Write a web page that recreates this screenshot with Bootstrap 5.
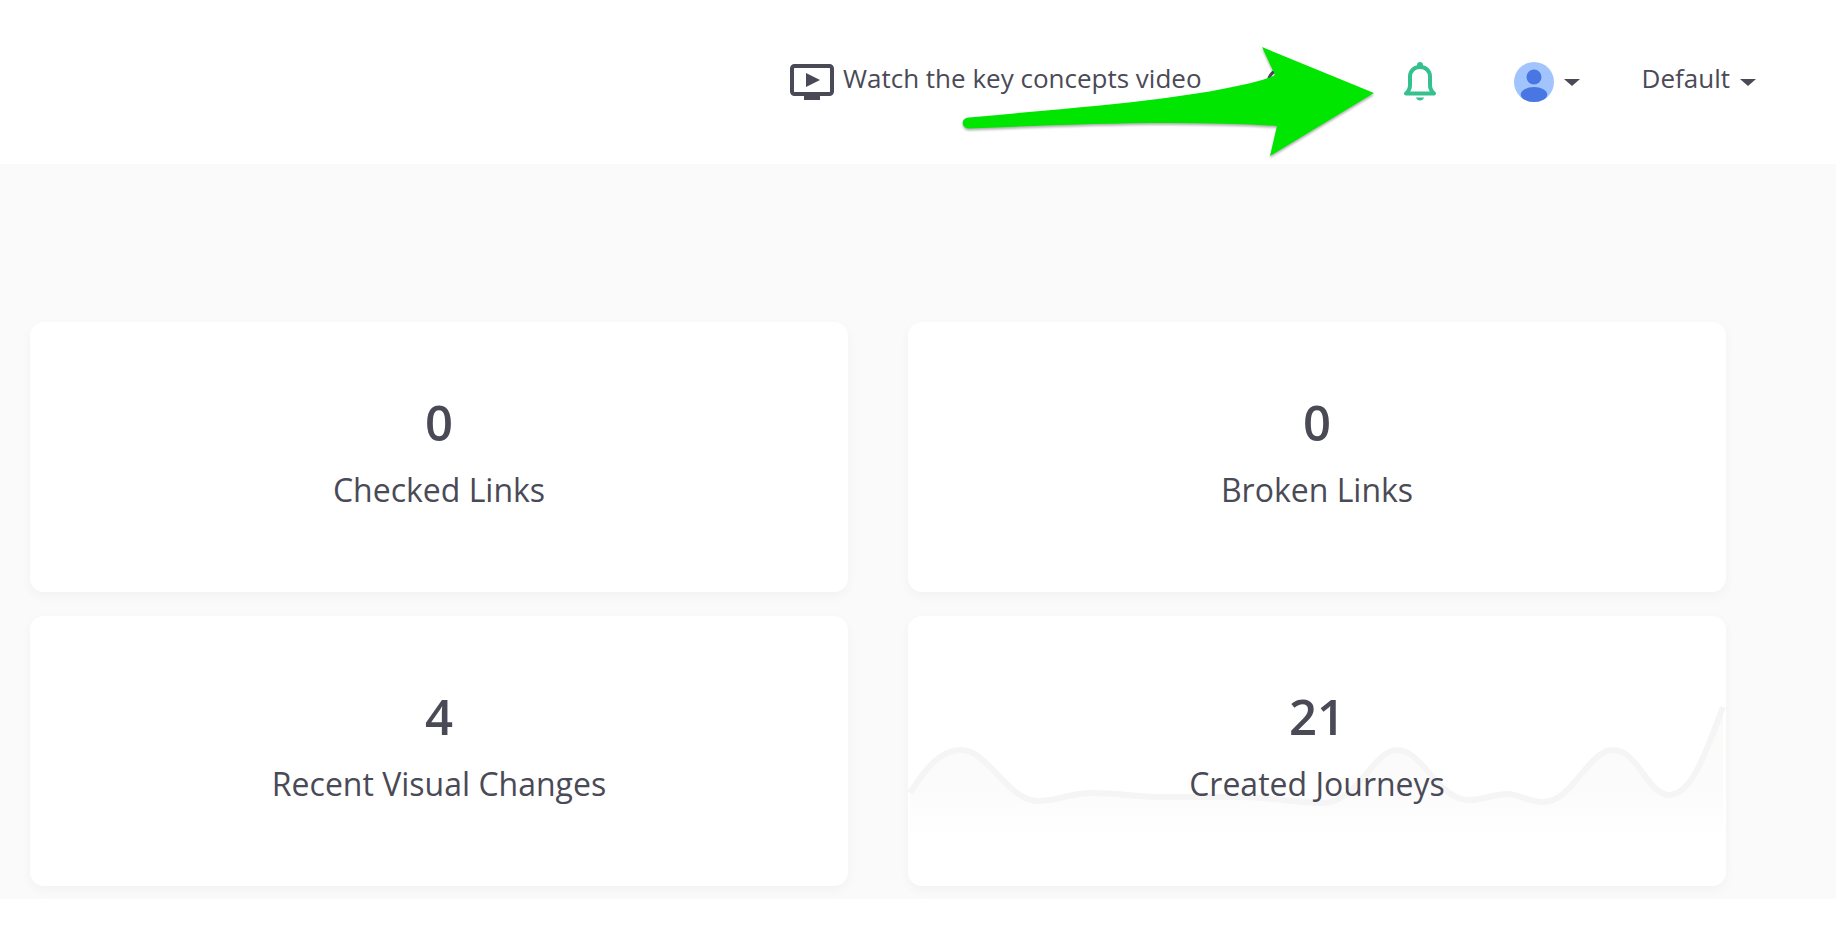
<!DOCTYPE html>
<html lang="en">

<head>
    <meta charset="UTF-8">
    <title>Dashboard</title>
    <link href="https://cdn.jsdelivr.net/npm/bootstrap@5.3.0/dist/css/bootstrap.min.css" rel="stylesheet">
    <style>
        body {
            font-family: "Open Sans", "Liberation Sans", sans-serif;
            color: #4a4a57;
            background: #fff;
            height: 940px;
            overflow: hidden;
        }

        .top-head {
            height: 164px;
            padding-right: 80px;
        }

        .video-link {
            color: #4a4a57;
            font-size: 26px;
            text-decoration: none;
            margin-right: 65px;
        }

        .video-link svg {
            margin-right: 9px;
        }

        .head-text {
            margin-bottom: 7px;
        }

        .help-mark {
            margin-right: 108px;
        }

        .user-drop {
            margin-left: 77px;
            margin-right: 62px;
        }

        .caret-mark {
            width: 0;
            height: 0;
            margin-left: 10px;
            border-left: 8px solid transparent;
            border-right: 8px solid transparent;
            border-top: 7px solid #4a4a57;
        }

        .env-drop {
            font-size: 26px;
        }

        .main-area {
            background: #fafafa;
            height: 735px;
            padding: 158px 110px 0 30px;
        }

        .stat-grid {
            display: grid;
            grid-template-columns: 818px 818px;
            grid-auto-rows: 270px;
            column-gap: 60px;
            row-gap: 24px;
        }

        .stat-card {
            background: #fff;
            border: 0;
            border-radius: 14px;
            box-shadow: 0 4px 12px rgba(0, 0, 0, .035);
            overflow: hidden;
        }

        .stat-num {
            font-size: 49px;
            font-weight: 600;
            line-height: 60px;
            margin-top: 70px;
        }

        .stat-label {
            font-size: 32px;
            line-height: 42px;
            margin-top: 17px;
        }

        .spark-line {
            position: absolute;
            left: 0;
            top: 0;
            width: 100%;
            height: 100%;
        }

        .stat-text {
            position: relative;
        }

        .pointer-arrow {
            position: absolute;
            left: 950px;
            top: 40px;
            filter: drop-shadow(0 2px 1px rgba(0, 0, 0, .3));
        }
    </style>
</head>

<body>
    <header class="top-head d-flex align-items-center justify-content-end">
        <a href="#" class="video-link d-flex align-items-center">
            <svg width="44" height="36" viewBox="0 0 44 36">
                <rect x="2" y="2" width="40" height="28" rx="2.5" fill="none" stroke="#4a4a57" stroke-width="4" />
                <rect x="14" y="31" width="16" height="5" fill="#4a4a57" />
                <path d="M16 9 L30 16 L16 23 Z" fill="#4a4a57" />
            </svg>
            <span class="head-text">Watch the key concepts video</span>
        </a>
        <svg class="help-mark" width="28" height="28" viewBox="0 0 28 28">
            <circle cx="14" cy="14" r="12.5" fill="none" stroke="#4a4a57" stroke-width="3" />
        </svg>
        <svg width="34" height="40" viewBox="0 0 34 40">
            <circle cx="17" cy="3" r="3" fill="#34c08f" />
            <path d="M3 31.5 Q7 28 7 23 V14.5 C7 9 11 5 17 5 C23 5 27 9 27 14.5 V23 Q27 28 31 31.5 Z" fill="none" stroke="#34c08f" stroke-width="4" stroke-linejoin="round" />
            <path d="M13 35.5 H21 C20 39.5 14 39.5 13 35.5 Z" fill="#34c08f" />
        </svg>
        <div class="user-drop d-flex align-items-center">
            <svg width="40" height="40" viewBox="0 0 40 40">
                <circle cx="20" cy="20" r="20" fill="#a1c4fd" />
                <circle cx="20" cy="15" r="7.5" fill="#4876e2" />
                <ellipse cx="20" cy="32.5" rx="13.2" ry="7.5" fill="#4876e2" />
            </svg>
            <span class="caret-mark"></span>
        </div>
        <div class="env-drop d-flex align-items-center">
            <span class="head-text">Default</span>
            <span class="caret-mark"></span>
        </div>
    </header>

    <svg class="pointer-arrow" width="440" height="130" viewBox="0 0 440 130">
        <path d="M19 77.5 C120 68 240 60 312 40 Q322 37 325 35 L312 7 L424 53 L320 116 L327 86 C230 80 130 84 20 88.5 C11 89 10 78 19 77.5 Z" fill="#00e600" />
    </svg>

    <main class="main-area">
        <div class="stat-grid">
            <div class="card stat-card text-center">
                <div class="stat-num">0</div>
                <div class="stat-label">Checked Links</div>
            </div>
            <div class="card stat-card text-center">
                <div class="stat-num">0</div>
                <div class="stat-label">Broken Links</div>
            </div>
            <div class="card stat-card text-center">
                <div class="stat-num">4</div>
                <div class="stat-label">Recent Visual Changes</div>
            </div>
            <div class="card stat-card text-center">
                <svg class="spark-line" viewBox="0 0 818 270" preserveAspectRatio="none">
                    <defs>
                        <linearGradient id="sparkFill" x1="0" y1="0" x2="0" y2="1">
                            <stop offset="0" stop-color="#fafbf9" />
                            <stop offset=".6" stop-color="#fbfbfb" />
                            <stop offset="1" stop-color="#ffffff" />
                        </linearGradient>
                    </defs>
                    <path d="M2 177 C20 148 35 134 53 134 C80 134 100 185 130 185 C150 185 160 177 185 177 C210 177 230 181 256 181 H333 C360 181 390 187 415 187 C450 187 465 134 489 134 C515 134 530 184 561 184 C575 184 585 178 599 178 C612 178 620 186 635 186 C665 186 680 134 705 134 C730 134 740 179 761 179 C785 179 800 130 815 91 V225 H2 Z" fill="url(#sparkFill)" />
                    <path d="M2 177 C20 148 35 134 53 134 C80 134 100 185 130 185 C150 185 160 177 185 177 C210 177 230 181 256 181 H333 C360 181 390 187 415 187 C450 187 465 134 489 134 C515 134 530 184 561 184 C575 184 585 178 599 178 C612 178 620 186 635 186 C665 186 680 134 705 134 C730 134 740 179 761 179 C785 179 800 130 815 91" fill="none" stroke="#f5f5f5" stroke-width="6" />
                </svg>
                <div class="stat-num stat-text">21</div>
                <div class="stat-label stat-text">Created Journeys</div>
            </div>
        </div>
    </main>
</body>

</html>
